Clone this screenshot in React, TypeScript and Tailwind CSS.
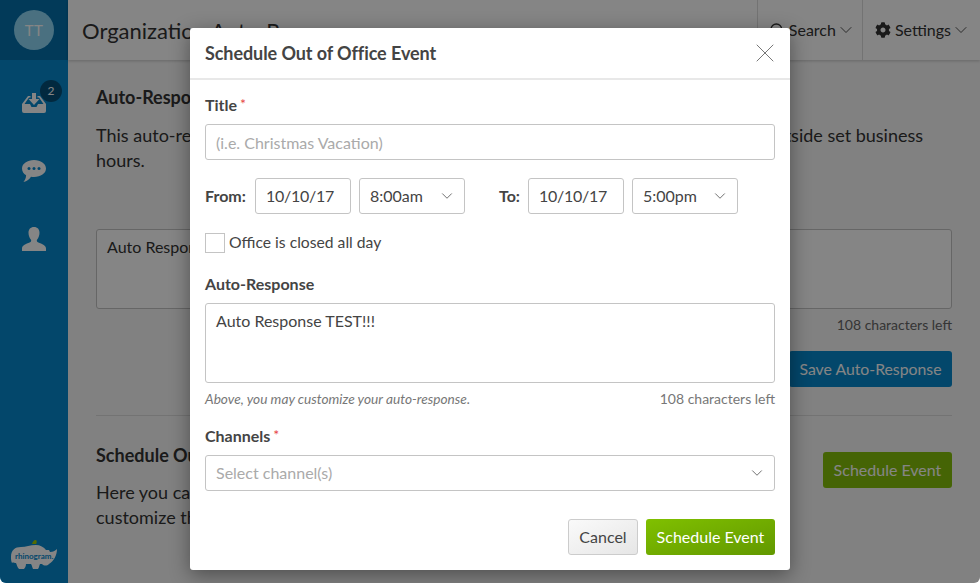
import { ChevronDown, Search, X } from 'lucide-react';
import { FaCog } from 'react-icons/fa';

const InboxIcon = () => (
  <svg viewBox="0 0 24 20" className="h-5 w-6 fill-white">
    <path d="M10 0h4v6h3.500L12 12 6.500 6H10z" />
    <path d="M6 3h2.500v1.500H7L2.500 11H8l1.500 3h5l1.500-3h5.500L17 4.500h-1.500V3H18l6 8v7a2 2 0 0 1-2 2H2a2 2 0 0 1-2-2v-7z" />
  </svg>
);

const ChatIcon = () => (
  <svg viewBox="0 0 24 23" className="h-[23px] w-6">
    <path
      className="fill-white"
      d="M12 0c6.600 0 12 3.600 12 8.500S18.600 17 12 17c-1 0-2-.1-3-.3C7.500 19 5 21.500 1.500 22c1.500-1.800 2.500-4 2.600-6.700C1.600 13.800 0 11.300 0 8.500 0 3.600 5.400 0 12 0z"
    />
    <circle cx="7" cy="8.500" r="1.500" className="fill-[#0689ce]" />
    <circle cx="12" cy="8.500" r="1.500" className="fill-[#0689ce]" />
    <circle cx="17" cy="8.500" r="1.500" className="fill-[#0689ce]" />
  </svg>
);

const UserIcon = () => (
  <svg viewBox="0 0 24 24" className="h-6 w-6 fill-white">
    <path d="M12 0c3.500 0 5.500 2.300 5.500 5.800 0 2.700-1 5.200-2.300 6.700-.6.700-.5 2 .3 2.600 1.900 1.300 8.500 2.400 8.500 6.400V24H0v-2.500c0-4 6.600-5.100 8.500-6.400.8-.6.900-1.900.3-2.600C7.500 11 6.500 8.500 6.500 5.800 6.500 2.300 8.500 0 12 0z" />
  </svg>
);

const RhinoLogo = () => (
  <div className="relative h-[34px] w-[50px]">
    <svg viewBox="0 0 50 34" className="h-[34px] w-[50px]">
      <path
        className="fill-white"
        d="M2 20C2 13 6 10 12 10c5 0 9-2 15-2 4 0 8 2 10 5h3l1 2c3 0 5-1 7-3 0 6-3 12-8 15-2 2-5 2-7 0h-2c-1 2-1 4-2 5h-5c-1-2-1-4-2-5h-5c0 2-1 4-2 5h-5c-2-2-2-4-3-6-2 0-3-1-4 0-1-2-1-4-1-6z"
      />
      <path className="fill-[#a4d000]" d="M23 7c.5-2 2-4 3.500-4 1.500 0 1.500 2.500.5 4z" />
    </svg>
    <span className="absolute left-[6px] top-[13px] text-[8px] font-bold leading-3 text-[#0689ce]">
      rhinogram.
    </span>
  </div>
);

const Field = ({ children, className }: { children: React.ReactNode; className: string }) => (
  <div className={`flex h-9 items-center rounded-[3px] border border-[#c4c4c4] bg-white px-[10px] text-[16px] ${className}`}>
    {children}
  </div>
);

const SelectField = ({ value, className }: { value: string; className: string }) => (
  <Field className={`justify-between pr-2 ${className}`}>
    <span>{value}</span>
    <ChevronDown className="h-[18px] w-[18px] text-[#666]" strokeWidth={1.25} />
  </Field>
);

const Label = ({ children, required }: { children: React.ReactNode; required?: boolean }) => (
  <div className="flex text-[16px] font-bold leading-5 text-[#444]">
    {children}
    {required && <span className="ml-[3px] -mt-px text-[14px] font-normal text-[#e64545]">*</span>}
  </div>
);

export default function App() {
  return (
    <div
      className="relative flex h-[583px] w-[980px] overflow-hidden rounded-b-[6px] bg-white text-[#333]"
      style={{ fontFamily: 'Lato, "Open Sans", sans-serif' }}
    >
      {/* Barra lateral */}
      <aside className="flex w-[68px] shrink-0 flex-col items-center bg-[#0689ce]">
        <div className="flex h-[60px] w-full items-center justify-center bg-[#0470ab]">
          <div className="flex h-10 w-10 items-center justify-center rounded-full bg-[#8ed7f6] text-[15px] tracking-wide text-white">
            TT
          </div>
        </div>
        <div className="relative mt-[33px]">
          <InboxIcon />
          <span className="absolute -right-4 -top-[13px] flex h-[22px] w-[22px] items-center justify-center rounded-full bg-[#05507a] text-[12px] text-white">
            2
          </span>
        </div>
        <div className="mt-[47px]">
          <ChatIcon />
        </div>
        <div className="mt-[44px]">
          <UserIcon />
        </div>
        <div className="mt-auto mb-3">
          <RhinoLogo />
        </div>
      </aside>

      {/* Contenido principal */}
      <main className="min-w-0 flex-1 bg-[#f7f7f7]">
        <header className="relative flex h-[60px] items-center justify-between bg-white shadow-[0_1px_3px_rgba(0,0,0,0.2)]">
          <h1 className="pl-[14px] text-[22px] font-normal">Organization Auto-Response</h1>
          <div className="flex h-full items-center text-[16px]">
            <div className="flex h-full items-center border-l border-[#ddd] pl-[11px] pr-[6px]">
              <Search className="mr-1 h-4 w-4" />
              <span>Search</span>
              <ChevronDown className="h-5 w-5" strokeWidth={1} />
            </div>
            <div className="flex h-full items-center border-l border-[#ddd] pl-3 pr-[9px]">
              <FaCog className="mr-1 h-4 w-4" />
              <span>Settings</span>
              <ChevronDown className="h-5 w-5" strokeWidth={1} />
            </div>
          </div>
        </header>

        <div className="px-7 pt-[25px]">
          <h2 className="text-[18px] font-bold leading-6">Auto-Response</h2>
          <p className="mt-[14px] text-[18px] leading-[25px]">
            This auto-response will be sent to any contact who messages your organization from outside set business hours.
          </p>
          <div className="mt-[56px] h-20 rounded-[3px] border border-[#c4c4c4] bg-white px-[10px] py-[5px] text-[16px]">
            Auto Response TEST!!!
          </div>
          <div className="mt-[5px] text-right text-[14px] text-[#666]">108 characters left</div>
          <div className="mt-4 flex justify-end">
            <div className="flex h-9 w-[163px] items-center justify-center rounded-[3px] bg-[#0689ce] text-[15.800px] text-white">
              Save Auto-Response
            </div>
          </div>
          <div className="mt-7 border-t border-[#ddd]" />
          <div className="mt-[27px] flex items-start justify-between">
            <div className="w-[640px]">
              <h2 className="text-[18px] font-bold leading-6">Schedule Out of Office</h2>
              <p className="mt-[13px] text-[18px] leading-[25px]">
                Here you can schedule an out of office event for specific dates and times, and customize the auto-response that is sent.
              </p>
            </div>
            <div className="mt-[9px] flex h-9 w-[129px] items-center justify-center rounded-[3px] bg-[#85c00a] text-[16px] text-white">
              Schedule Event
            </div>
          </div>
        </div>
      </main>

      {/* Modal */}
      <div className="absolute inset-0 flex justify-center bg-black/[0.48] pt-7">
        <div className="h-[542px] w-[600px] rounded-[3px] bg-white text-[#444] shadow-[0_5px_20px_rgba(0,0,0,0.4)]">
          <div className="flex h-[52px] items-center justify-between border-b-2 border-[#e8e8e8] pl-[15px] pr-[9px]">
            <h3 className="text-[18px] font-bold tracking-[-0.08px]">Schedule Out of Office Event</h3>
            <X className="h-8 w-8 text-[#777]" strokeWidth={0.75} />
          </div>

          <div className="px-[15px] pt-[15px]">
            <Label required>Title</Label>
            <Field className="mt-[9px] pt-[2px] text-[#aaa]">(i.e. Christmas Vacation)</Field>

            <div className="mt-[18px] flex items-center">
              <span className="w-[50px] text-[16px] font-bold">From:</span>
              <Field className="w-24 tracking-[-0.25px]">10/10/17</Field>
              <SelectField value="8:00am" className="ml-2 w-[106px]" />
              <span className="ml-[34px] w-[29px] text-[16px] font-bold">To:</span>
              <Field className="w-24 tracking-[-0.25px]">10/10/17</Field>
              <SelectField value="5:00pm" className="ml-2 w-[106px]" />
            </div>

            <div className="mt-[17px] flex items-center gap-1 text-[15.700px]">
              <div className="h-5 w-5 border border-[#c4c4c4]" />
              <span>Office is closed all day</span>
            </div>

            <div className="mt-[19px]">
              <Label>Auto-Response</Label>
            </div>
            <div className="mt-[9px] h-20 rounded-[3px] border border-[#c4c4c4] px-[10px] py-[5px] text-[16px]">
              Auto Response TEST!!!
            </div>
            <div className="mt-[6px] flex items-center justify-between text-[#777]">
              <em className="text-[13.700px]">Above, you may customize your auto-response.</em>
              <span className="-mt-px text-[14px]">108 characters left</span>
            </div>

            <div className="mt-[17px]">
              <Label required>Channels</Label>
            </div>
            <SelectField value="Select channel(s)" className="mt-[9px] text-[#aaa]" />

            <div className="mt-7 flex justify-end gap-2">
              <div className="flex h-9 w-[70px] items-center justify-center rounded-[3px] border border-[#ccc] bg-gradient-to-br from-[#fafafa] to-[#e6e6e6] text-[16px]">
                Cancel
              </div>
              <div className="flex h-9 w-[129px] items-center justify-center rounded-[3px] bg-gradient-to-br from-[#80c000] to-[#629800] text-[16px] text-white">
                Schedule Event
              </div>
            </div>
          </div>
        </div>
      </div>
    </div>
  );
}
